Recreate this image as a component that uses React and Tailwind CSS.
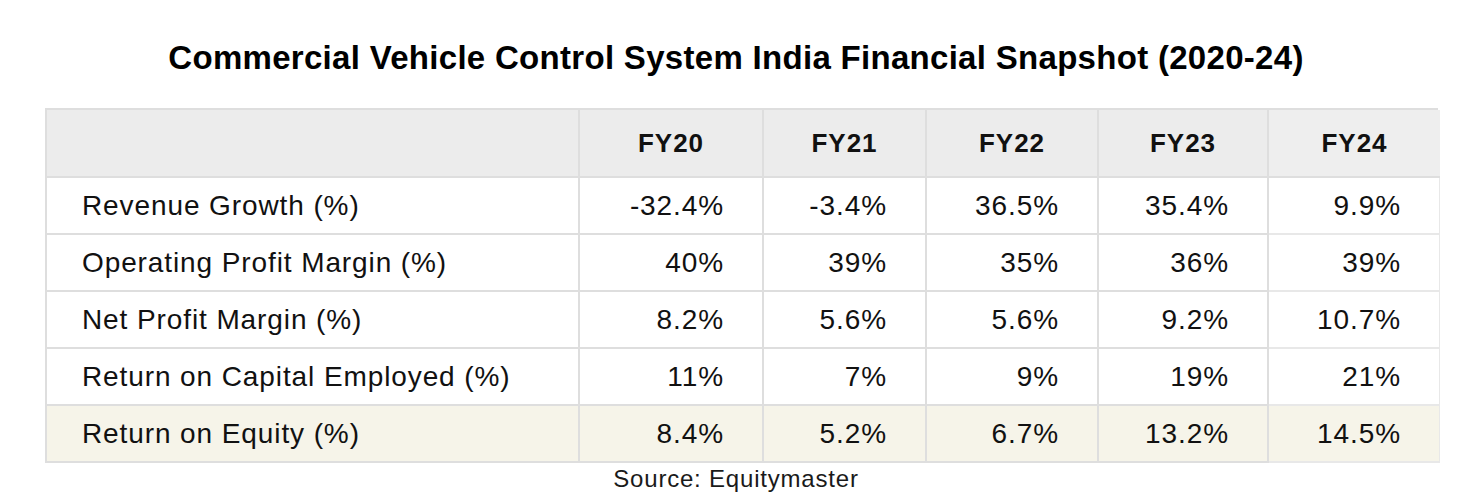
const years = ["FY20", "FY21", "FY22", "FY23", "FY24"];

const rows = [
  { label: "Revenue Growth (%)", values: ["-32.4%", "-3.4%", "36.5%", "35.4%", "9.9%"] },
  { label: "Operating Profit Margin (%)", values: ["40%", "39%", "35%", "36%", "39%"] },
  { label: "Net Profit Margin (%)", values: ["8.2%", "5.6%", "5.6%", "9.2%", "10.7%"] },
  { label: "Return on Capital Employed (%)", values: ["11%", "7%", "9%", "19%", "21%"] },
  { label: "Return on Equity (%)", values: ["8.4%", "5.2%", "6.7%", "13.2%", "14.5%"], highlight: true },
];

export default function App() {
  return (
    <div
      className="w-[1472px] h-[504px] bg-white text-[#111] overflow-hidden"
      style={{ fontFamily: '"Liberation Sans", Arial, sans-serif' }}
    >
      <h1 className="mt-[38px] h-[40px] leading-[40px] text-center text-[33px] font-bold tracking-[0.3px] text-black">
        Commercial Vehicle Control System India Financial Snapshot (2020-24)
      </h1>

      <div className="ml-[45px] mt-[30px] w-[1393px] grid grid-cols-[533px_184px_163px_172px_170px_171px] border-l-2 border-t-2 border-[#dedede]">
        {/* header */}
        <div className="h-[68px] bg-[#ececec] border-r-2 border-b-2 border-[#dedede]" />
        {years.map((y, i) => (
          <div
            key={y}
            className={
              i === 4
                ? "h-[68px] bg-[#eeeeee] border-b-2 border-[#dedede] flex items-center justify-center text-[26px] font-bold tracking-[1px]"
                : "h-[68px] bg-[#ececec] border-r-2 border-b-2 border-[#dedede] flex items-center justify-center text-[26px] font-bold tracking-[1px]"
            }
          >
            {y}
          </div>
        ))}

        {/* body */}
        {rows.map((r) => (
          <Row key={r.label} row={r} />
        ))}
      </div>

      <p className="h-[32px] leading-[32px] text-center text-[24px] tracking-[0.8px] text-[#1a1a1a]">
        Source: Equitymaster
      </p>
    </div>
  );
}

function Row({ row }) {
  const bg = row.highlight ? "bg-[#f6f4e9]" : "bg-white";
  return (
    <>
      <div
        className={`${bg} h-[57px] border-r-2 border-b-2 border-[#dedede] flex items-center pl-[35px] text-[28px] tracking-[0.9px]`}
      >
        {row.label}
      </div>
      {row.values.map((v, i) => (
        <div
          key={i}
          className={
            i === 4
              ? `${bg} h-[57px] border-r border-b-2 border-[#e8e8e8] flex items-center justify-end pr-[38px] text-[28px] tracking-[0.9px]`
              : `${bg} h-[57px] border-r-2 border-b-2 border-[#dedede] flex items-center justify-end pr-[38px] text-[28px] tracking-[0.9px]`
          }
        >
          {v}
        </div>
      ))}
    </>
  );
}
